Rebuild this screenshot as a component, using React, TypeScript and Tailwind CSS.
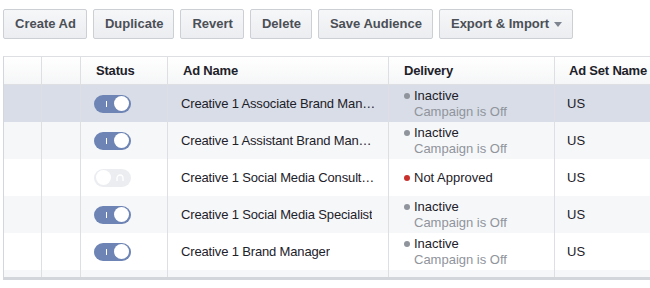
const buttons = ["Create Ad", "Duplicate", "Revert", "Delete", "Save Audience"];

type Row = { on: boolean; name: string; status: "inactive" | "rejected" };

const rows: Row[] = [
  { on: true, name: "Creative 1 Associate Brand Manager", status: "inactive" },
  { on: true, name: "Creative 1 Assistant Brand Manager", status: "inactive" },
  { on: false, name: "Creative 1 Social Media Consultant", status: "rejected" },
  { on: true, name: "Creative 1 Social Media Specialist", status: "inactive" },
  { on: true, name: "Creative 1 Brand Manager", status: "inactive" },
];

function Toggle({ on }: { on: boolean }) {
  if (on) {
    return (
      <div className="relative flex h-[18px] w-[37px] items-center rounded-full bg-[#6d84b4]">
        <span className="absolute left-[12px] top-[6px] h-[6px] w-px bg-white" />
        <span className="absolute right-[2px] top-[1.5px] h-[15px] w-[15px] rounded-full bg-white" />
      </div>
    );
  }
  return (
    <div className="relative flex h-[18px] w-[37px] items-center rounded-full bg-[#ebedf0]">
      <span className="absolute left-[2px] top-[1.5px] h-[15px] w-[15px] rounded-full bg-white" />
      <svg className="absolute left-[22px] top-[5px]" width="8" height="8" viewBox="0 0 8 8">
        <path d="M1 7 V4 a3 3 0 0 1 6 0 V7" fill="none" stroke="#fff" strokeWidth="1.3" />
      </svg>
    </div>
  );
}

function Cells({ children, bg }: { children: React.ReactNode; bg: string }) {
  return <div className={`flex h-[37px] ${bg}`}>{children}</div>;
}

export default function App() {
  return (
    <div className="h-[288px] w-[650px] overflow-hidden bg-white font-['Liberation_Sans',Arial,sans-serif] text-[13px] text-[#1d2129]">
      <div className="flex gap-[6px] pl-[3px] pt-[9px]">
        {buttons.map((b) => (
          <button
            key={b}
            className="h-[30px] rounded-[2px] border border-[#ccd0d5] bg-gradient-to-b from-[#f6f7f9] to-[#ebedf0] pl-[11px] pr-[10px] text-[13px] font-bold text-[#4b4f56]"
          >
            {b}
          </button>
        ))}
        <button className="flex h-[30px] items-center gap-[5px] rounded-[2px] border border-[#ccd0d5] bg-gradient-to-b from-[#f6f7f9] to-[#ebedf0] pl-[11px] pr-[10px] text-[13px] font-bold text-[#4b4f56]">
          Export &amp; Import
          <svg width="8" height="5" viewBox="0 0 8 5">
            <path d="M0 0 H8 L4 5 Z" fill="#7f8590" />
          </svg>
        </button>
      </div>

      <div className="ml-[3px] mt-[17px] w-[700px] border-l border-t border-b-[3px] border-[#d3d6db] border-t-[#dddfe2]">
        <div className="flex h-[28px] border-b border-[#dddfe2] bg-gradient-to-b from-white to-[#f5f6f7] font-bold tracking-[-0.2px] text-[#1d2129]">
          <div className="w-[38px] border-r border-[#dddfe2]" />
          <div className="w-[39px] border-r border-[#dddfe2]" />
          <div className="flex w-[87px] items-center border-r border-[#dddfe2] pl-[15px]">Status</div>
          <div className="flex w-[221px] items-center border-r border-[#dddfe2] pl-[15px]">Ad Name</div>
          <div className="flex w-[166px] items-center border-r border-[#dddfe2] pl-[15px]">Delivery</div>
          <div className="flex flex-1 items-center pl-[14px]">Ad Set Name</div>
        </div>

        {rows.map((r, i) => (
          <Cells key={r.name} bg={i === 0 ? "bg-[#d8dde7]" : i % 2 === 1 ? "bg-[#f6f7f9]" : "bg-white"}>
            <div className="w-[38px] border-r border-[#dddfe2]" />
            <div className="w-[39px] border-r border-[#dddfe2]" />
            <div className="flex w-[87px] items-center border-r border-[#dddfe2] pl-[13px]">
              <Toggle on={r.on} />
            </div>
            <div className="flex w-[221px] items-center border-r border-[#dddfe2] pl-[13px] pr-[12px] tracking-[-0.15px]">
              <span className="truncate">{r.name}</span>
            </div>
            <div className="flex w-[166px] flex-col justify-center border-r border-[#dddfe2] pl-[15px] leading-[16px]">
              {r.status === "inactive" ? (
                <>
                  <div className="flex items-center gap-[4px]">
                    <span className="h-[6px] w-[6px] rounded-full bg-[#90949c]" />
                    Inactive
                  </div>
                  <div className="pl-[10px] text-[#90949c]">Campaign is Off</div>
                </>
              ) : (
                <div className="flex items-center gap-[4px]">
                  <span className="h-[6px] w-[6px] rounded-full bg-[#c9302c]" />
                  Not Approved
                </div>
              )}
            </div>
            <div className="flex flex-1 items-center pl-[12px]">US</div>
          </Cells>
        ))}
        <div className="flex h-[7px] bg-[#f6f7f9]">
          <div className="w-[38px] border-r border-[#dddfe2]" />
          <div className="w-[39px] border-r border-[#dddfe2]" />
          <div className="w-[87px] border-r border-[#dddfe2]" />
          <div className="w-[221px] border-r border-[#dddfe2]" />
          <div className="w-[166px] border-r border-[#dddfe2]" />
        </div>
      </div>
    </div>
  );
}
